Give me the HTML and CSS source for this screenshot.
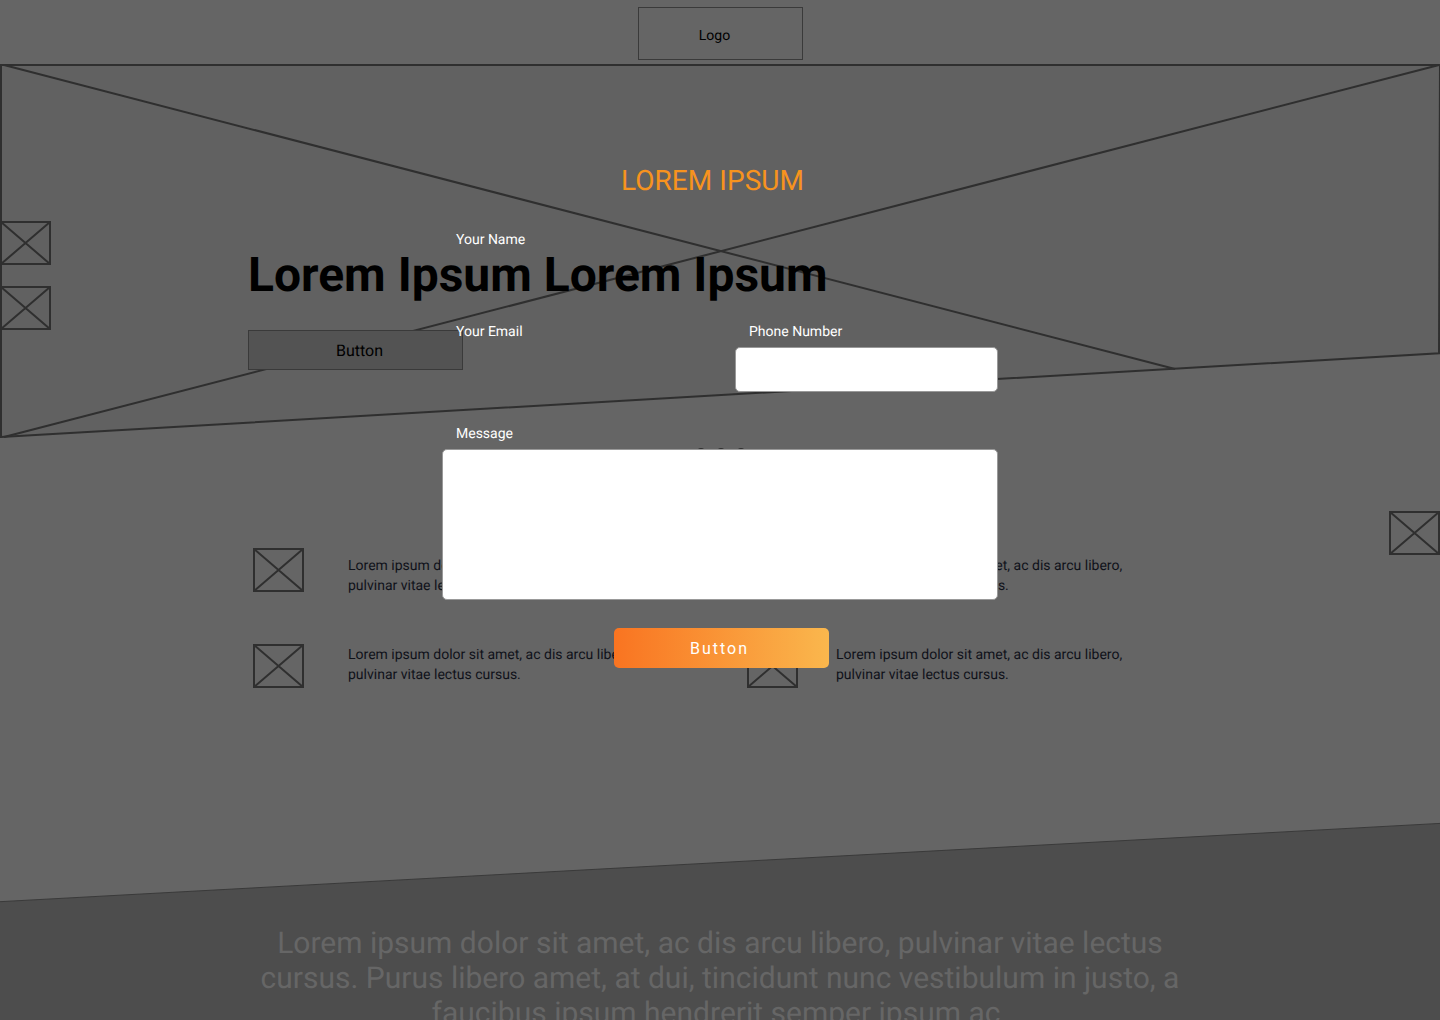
FILE: index.html
```html
<!DOCTYPE html>
<html lang="en">
<head>
<meta charset="utf-8">
<title>Lorem Ipsum</title>
<link rel="stylesheet" href="styles.css">
</head>
<body>
<svg class="defs" aria-hidden="true">
  <symbol id="box" viewBox="0 0 51 44">
    <path d="M1 1H50V43H1ZM1 1L50 43M50 1L1 43" fill="none" stroke="#2f2f2f" stroke-width="2"/>
  </symbol>
</svg>
<div class="page">
  <header class="header"><div class="logo">Logo</div></header>
  <section class="hero">
    <svg class="hero-art" viewBox="0 0 1440 374" aria-hidden="true">
      <path d="M1 1H1440L1439 289.3L1 373Z" fill="#616161" stroke="#2f2f2f" stroke-width="2"/>
      <path d="M4 1L1175 305M4 373L1439 1" fill="none" stroke="#2f2f2f" stroke-width="2"/>
    </svg>
    <h1 class="title">Lorem Ipsum Lorem Ipsum</h1>
    <div class="hero-button">Button</div>
  </section>
  <div class="dots"><i></i><i></i><i></i></div>
  <section class="features">
    <div class="feature upper">
      <svg class="icon"><use href="#box"/></svg>
      <p>Lorem ipsum dolor sit amet, ac dis arcu libero, pulvinar vitae lectus cursus.</p>
    </div>
    <div class="feature upper">
      <svg class="icon"><use href="#box"/></svg>
      <p>Lorem ipsum dolor sit amet, ac dis arcu libero, pulvinar vitae lectus cursus.</p>
    </div>
    <div class="feature">
      <svg class="icon"><use href="#box"/></svg>
      <p>Lorem ipsum dolor sit amet, ac dis arcu libero, pulvinar vitae lectus cursus.</p>
    </div>
    <div class="feature">
      <svg class="icon"><use href="#box"/></svg>
      <p>Lorem ipsum dolor sit amet, ac dis arcu libero, pulvinar vitae lectus cursus.</p>
    </div>
  </section>
  <footer class="footer">
    <svg class="footer-art" viewBox="0 0 1440 198" aria-hidden="true">
      <path d="M-2 79.8L1442 1.3V200H-2Z" fill="#4d4d4d" stroke="#3a3a3a"/>
    </svg>
    <p>Lorem ipsum dolor sit amet, ac dis arcu libero, pulvinar vitae lectus<br>cursus. Purus libero amet, at dui, tincidunt nunc vestibulum in justo, a<br>faucibus ipsum hendrerit semper ipsum ac.</p>
  </footer>
  <div class="side side-left">
    <svg class="icon"><use href="#box"/></svg>
    <svg class="icon"><use href="#box"/></svg>
  </div>
  <div class="side side-right">
    <svg class="icon"><use href="#box"/></svg>
  </div>
</div>
<form class="modal">
  <h2>LOREM IPSUM</h2>
  <div class="field field-name"><label>Your Name</label></div>
  <div class="field-row">
    <div class="field"><label>Your Email</label></div>
    <div class="field"><label>Phone Number</label><div class="input"></div></div>
  </div>
  <div class="field field-message"><label>Message</label><div class="input textarea"></div></div>
  <button type="button" class="submit">Button</button>
</form>
</body>
</html>
```
FILE: styles.css
```css
* { box-sizing: border-box; }
body {
  margin: 0;
  height: 1020px;
  overflow: hidden;
  position: relative;
  background: #656565;
  color: #000;
  font: 14px/20px Roboto, sans-serif;
  text-rendering: geometricPrecision;
}
h1, h2, p { margin: 0; }
svg { display: block; }
.defs { position: absolute; width: 0; height: 0; }
.page { height: 1020px; overflow: hidden; }

.header { height: 64px; padding: 7px 0 0 638px; }
.logo {
  width: 165px;
  height: 53px;
  border: 1px solid #3a3a3a;
  padding: 18px 12px 0 0;
  text-align: center;
}

.hero { position: relative; height: 374px; padding: 183px 0 0 248px; }
.hero-art { position: absolute; left: 0; top: 0; width: 1440px; height: 374px; z-index: -1; }
.title { font-size: 48px; line-height: 56px; font-weight: 700; }
.hero-button {
  width: 215px;
  height: 40px;
  margin-top: 27px;
  border: 1px solid #3a3a3a;
  background: #535353;
  padding: 10px 0 0 8px;
  font-size: 16px;
  text-align: center;
}

.dots { display: flex; justify-content: center; gap: 12px; height: 110px; padding: 10px 0 0 1px; }
.dots i { width: 8px; height: 8px; border-radius: 50%; background: #2f2f2f; }

.features {
  display: grid;
  grid-template-columns: 494px 480px;
  grid-template-rows: 96px 44px;
  padding-left: 253px;
  height: 274px;
  color: #10121a;
}
.feature { display: flex; align-items: flex-start; gap: 44px; }
.feature:nth-child(even) { gap: 38px; }
.feature p { width: 300px; margin-top: 1px; }
.feature.upper p { margin-top: 8px; }
.icon { width: 51px; height: 44px; flex: none; }

.footer { position: relative; height: 198px; padding: 104px 0 0 0; }
.footer-art { position: absolute; left: 0; top: 0; width: 1440px; height: 198px; z-index: -1; }
.footer p { font-size: 30px; line-height: 35px; color: #666; text-align: center; }

.side { position: absolute; display: flex; flex-direction: column; gap: 21px; }
.side-left { left: 0; top: 221px; }
.side-right { right: 0; top: 511px; }

.modal {
  position: absolute;
  left: 442px;
  top: 165px;
  width: 556px;
  color: #fff;
}
.modal h2 {
  font-size: 28px;
  line-height: 32px;
  font-weight: 400;
  letter-spacing: 0.05px;
  color: #f7931e;
  padding-left: 179px;
}
.field label { display: block; padding: 1px 0 0 14px; }
.field-name { height: 92px; margin-top: 32px; }
.field-row { display: grid; grid-template-columns: 263px 263px; gap: 30px; height: 102px; }
.input {
  height: 45px;
  margin-top: 5px;
  background: #fff;
  border: 1px solid #999;
  border-radius: 5px;
}
.textarea { height: 151px; }
.submit {
  display: block;
  width: 215px;
  height: 40px;
  margin: 28px 0 0 172px;
  padding: 2px 4px 0 0;
  border: 0;
  border-radius: 5px;
  background: linear-gradient(90deg, #f97421, #fab74d);
  color: #fff;
  font: 16px/20px Roboto, sans-serif;
  letter-spacing: 2px;
}
```
